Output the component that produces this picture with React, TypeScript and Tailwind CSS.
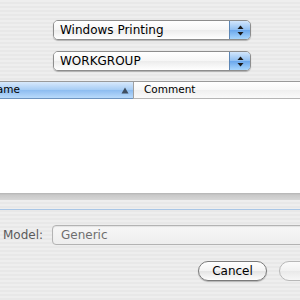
import React from "react";

const font = { fontFamily: '"DejaVu Sans", "Liberation Sans", sans-serif' };

function Arrows() {
  return (
    <svg width="7" height="11" viewBox="0 0 7 11">
      <path d="M3.5 0.5 L6.5 4 L0.5 4 Z" fill="#1a1a1a" />
      <path d="M0.5 7 L6.5 7 L3.5 10.5 Z" fill="#1a1a1a" />
    </svg>
  );
}

function Popup({ label }: { label: string }) {
  return (
    <div className="ml-[53px] w-[198px] h-[20px] flex rounded-[5px] border border-[#8d8d8d] shadow-[0_1px_1px_rgba(0,0,0,0.25)] overflow-hidden">
      <div className="flex-1 flex items-center pl-[6px] text-[12px] text-black bg-[linear-gradient(to_bottom,#ffffff,#f6f6f6_50%,#ececec_51%,#ffffff)]">
        {label}
      </div>
      <div className="w-[21px] flex items-center justify-center border-l border-[#5c86b5] bg-[linear-gradient(to_bottom,#d2e6fc,#8fbff2_50%,#6aa7ec_51%,#a8d6fd)]">
        <Arrows />
      </div>
    </div>
  );
}

export default function App() {
  return (
    <div
      style={font}
      className="w-[300px] h-[300px] overflow-hidden flex flex-col pt-[20px] bg-[repeating-linear-gradient(to_bottom,#eeeeee_0px,#eeeeee_2px,#e8e8e8_2px,#e8e8e8_4px)]"
    >
      <Popup label="Windows Printing" />
      <div className="mt-[11px]">
        <Popup label="WORKGROUP" />
      </div>

      {/* table */}
      <div className="mt-[10px] w-[300px] border-t border-[#9a9a9a] flex flex-col">
        <div className="h-[17px] flex text-[10.5px] text-black">
          <div className="w-[133px] shrink-0 flex items-center justify-between border-b border-[#6e94c0] bg-[linear-gradient(to_bottom,#d8e9fb,#a6ccf4_50%,#8dbcf0_51%,#b9dafb)]">
            <span className="ml-[-11px]">Name</span>
            <svg width="8" height="7" viewBox="0 0 8 7" className="mr-[4px]">
              <path d="M4 0.5 L7.5 6.5 L0.5 6.5 Z" fill="#3e4e61" />
            </svg>
          </div>
          <div className="flex-1 flex items-center pl-[10px] border-l border-[#a0a0a0] border-b border-b-[#b5b5b5] bg-[linear-gradient(to_bottom,#ffffff,#f7f7f7_50%,#efefef_51%,#fafafa)]">
            Comment
          </div>
        </div>
        <div className="h-[94px] bg-white" />
        <div className="h-[7px] bg-[linear-gradient(to_bottom,#b4b4b4,#c9c9c9_30%,#d6d6d6)]" />
      </div>

      <div className="mt-[9px] h-[1px] bg-[#a9c6e6]" />

      {/* Model row */}
      <div className="mt-[15px] flex items-center h-[20px]">
        <span className="ml-[3px] w-[49px] shrink-0 text-[12px] text-[#5a5a5a]">Model:</span>
        <div className="w-[280px] shrink-0 h-[20px] flex items-center pl-[8px] text-[12px] text-[#6f6f6f] rounded-[4px] border border-[#b3b3b3] bg-[linear-gradient(to_bottom,#f7f7f7,#eeeeee)] shadow-[inset_0_1px_1px_rgba(0,0,0,0.08)]">
          Generic
        </div>
      </div>

      {/* buttons */}
      <div className="mt-[16px] flex h-[20px]">
        <div className="ml-[198px] w-[69px] shrink-0 h-[20px] rounded-full border border-[#7a7a7a] flex items-center justify-center text-[12px] text-black bg-[linear-gradient(to_bottom,#ffffff,#f3f3f3_50%,#e4e4e4_51%,#fdfdfd)] shadow-[0_1px_1px_rgba(0,0,0,0.25)]">
          Cancel
        </div>
        <div className="ml-[12px] w-[69px] h-[20px] shrink-0 rounded-full border border-[#b8b8b8] bg-[linear-gradient(to_bottom,#fbfbfb,#f1f1f1_50%,#e9e9e9_51%,#f7f7f7)]" />
      </div>
    </div>
  );
}
